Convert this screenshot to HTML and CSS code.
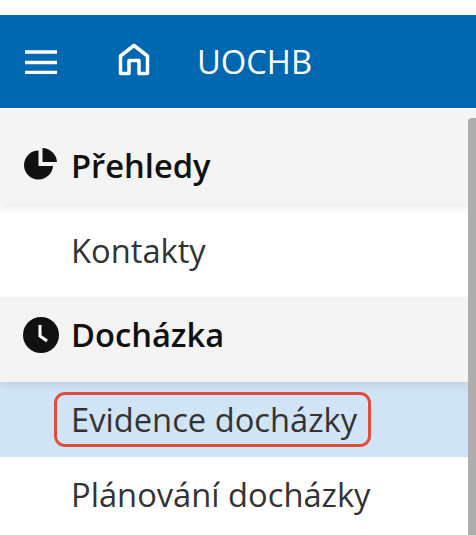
FILE: index.html
```html
<!DOCTYPE html>
<html lang="cs">
<head>
    <meta charset="UTF-8">
    <meta name="viewport" content="width=device-width, initial-scale=1.0">
    <title>UOCHB</title>
    <link rel="stylesheet" href="styles.css">
</head>
<body>
    <header class="topbar">
        <svg class="menu-icon" width="32" height="24" viewBox="0 0 32 24">
            <path d="M0 2h32M0 12.500h32M0 22.500h32" fill="none" stroke="#fff" stroke-width="3.500"/>
        </svg>
        <svg class="home-icon" width="32" height="33" viewBox="0 0 32 33">
            <path d="M2.500 30.500V13L16 2.500 29.500 13v17.500h-8.500V17.500H11v13z" fill="none" stroke="#fff" stroke-width="3.500" stroke-linejoin="round"/>
        </svg>
        <span class="brand">UOCHB</span>
    </header>
    <nav class="sidebar">
        <div class="scrollbar"></div>
        <div class="group group-first">
            <svg class="group-icon pie-icon" width="36" height="34" viewBox="0 0 36 34">
                <path d="M15.500 3.500A14.500 14.500 0 1 0 30 19H15.500z" fill="#111"/>
                <path d="M19.500 1A15 15 0 0 1 34 15H19.500z" fill="#111"/>
            </svg>
            <span>Přehledy</span>
        </div>
        <a class="item item-first">Kontakty</a>
        <div class="group group-second">
            <svg class="group-icon" width="36" height="36" viewBox="0 0 36 36">
                <circle cx="18" cy="18" r="18" fill="#111"/>
                <path d="M17 8v11l7 5" fill="none" stroke="#fff" stroke-width="3"/>
            </svg>
            <span>Docházka</span>
        </div>
        <a class="item item-active"><span class="highlight">Evidence docházky</span></a>
        <a class="item item-last">Plánování docházky</a>
    </nav>
</body>
</html>
```

FILE: styles.css
```css
html, body {
    height: 100%;
}
body {
    margin: 0;
    padding-top: 15px;
    box-sizing: border-box;
    overflow: hidden;
    background-color: white;
    color: #222;
    font-family: 'Open Sans', 'Noto Sans', sans-serif;
    font-size: 32.7px;
}
.topbar {
    display: flex;
    align-items: center;
    height: 93px;
    padding-left: 25px;
    box-sizing: border-box;
    background-color: #0067b1;
    color: white;
}
.menu-icon {
    flex: none;
}
.home-icon {
    flex: none;
    margin-left: 61px;
    margin-top: -5px;
}
.brand {
    margin-left: 47px;
}
.sidebar {
    position: relative;
}
.scrollbar {
    position: absolute;
    top: 9px;
    right: 0;
    width: 8px;
    height: 420px;
    border-radius: 4px 0 0 0;
    background-color: #adadad;
    z-index: 2;
}
.group {
    display: flex;
    align-items: center;
    gap: 12px;
    padding-left: 23px;
    box-sizing: border-box;
    background-color: #f4f4f4;
    color: #111;
    font-weight: 600;
    box-shadow: 0 4px 8px rgba(0, 0, 0, 0.08);
    position: relative;
}
.group-first {
    height: 95px;
    margin-top: 1px;
    padding-top: 18px;
}
.group-second {
    height: 85px;
    padding-bottom: 10px;
}
.pie-icon {
    margin-top: -4px;
}
.item {
    display: flex;
    align-items: center;
    padding-left: 71px;
    color: #333;
}
.item-first {
    height: 93px;
}
.item-active {
    height: 75px;
    background-color: #d1e4f5;
}
.item-last {
    height: 79px;
    padding-bottom: 4px;
    box-sizing: border-box;
}
.highlight {
    margin-left: -17px;
    padding: 0 11px 0 14px;
    height: 49px;
    line-height: 49px;
    border: 3px solid #e14d3c;
    border-radius: 11px;
}
```
